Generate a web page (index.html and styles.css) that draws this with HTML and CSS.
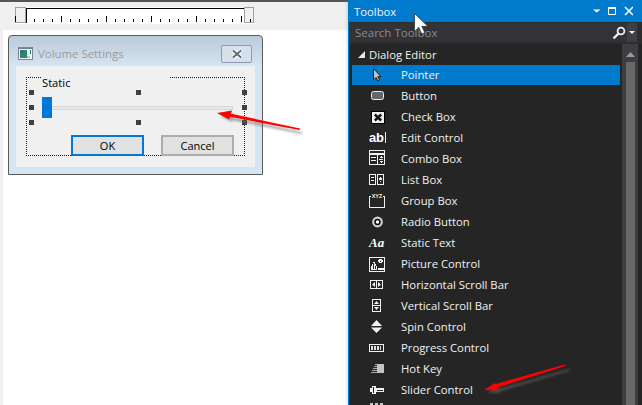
FILE: index.html
```html
<!DOCTYPE html>
<html lang="en">
<head>
<meta charset="utf-8">
<title>Toolbox</title>
<link rel="stylesheet" href="styles.css">
</head>
<body>
<div class="app">
  <main class="workspace">
    <div class="ruler-strip">
      <div class="ruler">
        <span class="ruler-thumb thumb-left"></span>
        <svg class="ruler-scale" width="218" height="16" viewBox="0 0 218 16" shape-rendering="crispEdges">
          <path d="M0.5 0V15M0 .5H218" stroke="#000" fill="none"/>
          <path d="M8.500 11v3M17.500 11v3M26.500 11v3M44.500 11v3M53.500 11v3M62.500 11v3M71.500 11v3M89.500 11v3M98.500 11v3M107.500 11v3M116.500 11v3M134.500 11v3M143.500 11v3M152.500 11v3M161.500 11v3M179.500 11v3M188.500 11v3M197.500 11v3M206.500 11v3" stroke="#000"/>
          <path d="M35.500 8v6M80.500 8v6M125.500 8v6M170.500 8v6M215.500 8v6" stroke="#000"/>
        </svg>
        <span class="ruler-thumb thumb-right"></span>
      </div>
    </div>
    <div class="surface">
      <section class="dialog">
        <header class="dialog-title">
          <svg class="dialog-icon" width="15" height="13" viewBox="0 0 15 13" shape-rendering="crispEdges">
            <rect x=".5" y=".5" width="14" height="12" fill="#f4f4f4" stroke="#7a8a8a"/>
            <rect x="1" y="1" width="13" height="1" fill="#6f8080"/>
            <rect x="2" y="3" width="7" height="8" fill="#2f8570"/>
            <rect x="2" y="3" width="4" height="3" fill="#3a6a8c"/>
            <rect x="12" y="3" width="1" height="4" fill="#1f7f6f"/>
            <rect x="9" y="9" width="3" height="2" fill="#b8c8c8"/>
          </svg>
          <span class="dialog-caption">Volume Settings</span>
          <button class="dialog-close" type="button">
            <svg width="12" height="10" viewBox="0 0 12 10"><path d="M2 1.500l8 7M10 1.500l-8 7" stroke="#fff" stroke-width="3.800"/><path d="M2 1.500l8 7M10 1.500l-8 7" stroke="#5c6670" stroke-width="1.800"/></svg>
          </button>
        </header>
        <div class="dialog-client">
          <div class="selection"></div>
          <span class="selection-gap"></span>
          <span class="static-label">Static</span>
          <span class="handle h-tl"></span><span class="handle h-tc"></span><span class="handle h-tr"></span>
          <span class="handle h-ml"></span><span class="handle h-mr"></span>
          <span class="handle h-bl"></span><span class="handle h-bc"></span><span class="handle h-br"></span>
          <div class="slider-track"></div>
          <div class="slider-thumb"></div>
          <button class="dlg-btn dlg-ok" type="button">OK</button>
          <button class="dlg-btn dlg-cancel" type="button">Cancel</button>
        </div>
      </section>
    </div>
  </main>

  <aside class="toolbox">
    <header class="tb-title">
      <span class="tb-name">Toolbox</span>
      <span class="tb-grip"></span>
      <svg class="tb-btns" width="40" height="14" viewBox="0 0 40 14">
        <path d="M0 5.500h7.500l-3.750 3z" fill="#fff"/>
        <path d="M15.500 3.500h7v7h-7z" fill="none" stroke="#fff"/>
        <path d="M15 4h8" stroke="#fff" stroke-width="2"/>
        <path d="M32 3l8 8M40 3l-8 8" stroke="#fff" stroke-width="1.500"/>
      </svg>
    </header>
    <div class="tb-search">
      <div class="tb-search-field">
        <span class="tb-search-text">Search Toolbox</span>
        <svg class="tb-search-icon" width="14" height="14" viewBox="0 0 14 14"><circle cx="9" cy="5" r="3.400" fill="none" stroke="#f1f1f1" stroke-width="1.800"/><path d="M6.500 7.500L1.500 12.500" stroke="#f1f1f1" stroke-width="2.400"/></svg>
        <span class="tb-search-drop"><svg width="6" height="3" viewBox="0 0 6 3"><path d="M0 0h6L3 3z" fill="#f1f1f1"/></svg></span>
      </div>
    </div>
    <div class="tb-body">
      <div class="tb-list">
        <div class="tb-group">
          <svg class="tb-caret" width="7" height="7" viewBox="0 0 7 7"><path d="M7 0v7H0z" fill="#e8e8e8"/></svg>
          <span>Dialog Editor</span>
        </div>
        <div class="tb-item is-active">
          <svg class="tb-icon" width="16" height="21" viewBox="0 0 16 21"><path d="M4.500 3.500v11.500l2.500-2.500 1.800 3.500 1.800-.9-1.800-3.400h3.200z" fill="#c4c4c4" stroke="#1c1c1c"/></svg>
          <span>Pointer</span>
        </div>
        <div class="tb-item">
          <svg class="tb-icon" width="16" height="21" viewBox="0 0 16 21"><rect x="2.500" y="5.500" width="12" height="8" rx="2" fill="#666" stroke="#f1f1f1"/></svg>
          <span>Button</span>
        </div>
        <div class="tb-item">
          <svg class="tb-icon" width="16" height="21" viewBox="0 0 16 21"><rect x="2" y="4" width="14" height="13" fill="#000"/><rect x="3" y="5" width="12" height="11" fill="#f1f1f1"/><path d="M5.800 7.500l6.400 6M12.200 7.500l-6.400 6" stroke="#111" stroke-width="2.400"/></svg>
          <span>Check Box</span>
        </div>
        <div class="tb-item">
          <span class="tb-icon-ab">ab<i class="tb-caret-bar"></i></span>
          <span>Edit Control</span>
        </div>
        <div class="tb-item">
          <svg class="tb-icon" width="16" height="21" viewBox="0 0 16 21" shape-rendering="crispEdges"><g fill="none" stroke="#f1f1f1"><path d="M.5 1.500h15v14H.5zM.5 5.500h15M.5 4.500h15M8.500 5.500v10M2 8.500h5M2 11.500h5M10 10.500h4"/></g><path d="M10 9h4l-2-2zM10 12h4l-2 2z" fill="#f1f1f1"/></svg>
          <span>Combo Box</span>
        </div>
        <div class="tb-item">
          <svg class="tb-icon" width="16" height="21" viewBox="0 0 16 21" shape-rendering="crispEdges"><g fill="none" stroke="#f1f1f1"><path d="M.5 4.500h6v10h-6zM8.500 4.500h6v10h-6zM2 7.500h3M2 10.500h3M10 9.500h3"/></g><path d="M10 8.500h3L11.500 6.500zM10 10.500h3L11.500 12.500z" fill="#f1f1f1"/></svg>
          <span>List Box</span>
        </div>
        <div class="tb-item">
          <svg class="tb-icon" width="16" height="21" viewBox="0 0 16 21"><path d="M2 5.500H.5v11h15v-11H14" fill="none" stroke="#f1f1f1" shape-rendering="crispEdges"/><text class="xyz" x="8" y="7" text-anchor="middle">XYZ</text></svg>
          <span>Group Box</span>
        </div>
        <div class="tb-item">
          <svg class="tb-icon" width="16" height="21" viewBox="0 0 16 21"><circle cx="8.500" cy="10" r="5.400" fill="#d0d0d0"/><circle cx="8.500" cy="10" r="3.200" fill="#0a0a0a"/><circle cx="8.500" cy="10" r="1.700" fill="#fff"/></svg>
          <span>Radio Button</span>
        </div>
        <div class="tb-item">
          <span class="tb-icon-aa">Aa</span>
          <span>Static Text</span>
        </div>
        <div class="tb-item">
          <svg class="tb-icon" width="16" height="21" viewBox="0 0 16 21" shape-rendering="crispEdges"><path d="M.5 3.500h15v14H.5z" fill="none" stroke="#f1f1f1"/><path d="M2 16v-4h1v-2h1V8h2v2h1v2h1v4zM10 5h3v1h1v2h-1v1h-3V8H9V6h1zM9 14h6v2H9z" fill="#f1f1f1"/><path d="M4 9h1v6H4zM6 12h1v3H6zM11 7h1v1h-1z" fill="#252526"/></svg>
          <span>Picture Control</span>
        </div>
        <div class="tb-item">
          <svg class="tb-icon" width="16" height="21" viewBox="0 0 16 21"><path d="M1.500 5.500h12v8h-12zM7.500 5.500v8" fill="none" stroke="#f1f1f1" shape-rendering="crispEdges"/><path d="M6 7v5L3 9.500zM9 7v5l3-2.500z" fill="#f1f1f1"/></svg>
          <span>Horizontal Scroll Bar</span>
        </div>
        <div class="tb-item">
          <svg class="tb-icon" width="16" height="21" viewBox="0 0 16 21"><path d="M3.500 3.500h8v12h-8zM3.500 9.500h8" fill="none" stroke="#f1f1f1" shape-rendering="crispEdges"/><path d="M5 8h5L7.500 5zM5 11h5l-2.500 3z" fill="#f1f1f1"/></svg>
          <span>Vertical Scroll Bar</span>
        </div>
        <div class="tb-item">
          <svg class="tb-icon" width="16" height="21" viewBox="0 0 16 21"><path d="M2 9L7.500 3 13 9zM2 10.500h11L7.500 16z" fill="#f1f1f1"/></svg>
          <span>Spin Control</span>
        </div>
        <div class="tb-item">
          <svg class="tb-icon" width="16" height="21" viewBox="0 0 16 21" shape-rendering="crispEdges"><rect x=".5" y="6.500" width="14" height="7" fill="none" stroke="#f1f1f1"/><path d="M2 8h2v4H2zM5 8h2v4H5zM8 8h2v4H8zM11 8h1v4h-1z" fill="#e0e0e0"/></svg>
          <span>Progress Control</span>
        </div>
        <div class="tb-item">
          <svg class="tb-icon" width="16" height="21" viewBox="0 0 16 21" shape-rendering="crispEdges"><path d="M8 5h7v9H8z" fill="#c4c4c4"/><path d="M6 5h2v1H6zM5 7h3v1H5zM4 9h4v1H4zM3 11h5v1H3zM2 13h6v1H2z" fill="#a8a8a8"/></svg>
          <span>Hot Key</span>
        </div>
        <div class="tb-item">
          <svg class="tb-icon" width="16" height="21" viewBox="0 0 16 21" shape-rendering="crispEdges"><path d="M1 8h2V6h4v2h8v4H7v2H3v-2H1z" fill="#f1f1f1"/><path d="M4 7h1v6H4zM8 9.500h6v1H8z" fill="#252526"/></svg>
          <span>Slider Control</span>
        </div>
        <div class="tb-item">
          <svg class="tb-icon" width="16" height="21" viewBox="0 0 16 21" shape-rendering="crispEdges"><path d="M1 2h3v2H1zM6 2h3v2H6zM11 2h3v2h-3z" fill="#c8c8c8"/></svg>
          <span></span>
        </div>
      </div>
      <div class="tb-scroll">
        <svg class="tb-scroll-up" width="9" height="5" viewBox="0 0 9 5"><path d="M0 5h9L4.500 0z" fill="#999"/></svg>
        <div class="tb-scroll-thumb"></div>
      </div>
    </div>
  </aside>
</div>

<svg class="annotations" width="642" height="405" viewBox="0 0 642 405">
  <defs>
    <filter id="blur" x="-20%" y="-50%" width="140%" height="200%"><feGaussianBlur stdDeviation="1.200"/></filter>
  </defs>
  <g fill="#666" opacity=".55" filter="url(#blur)">
    <path d="M220 116l14-2-2 8z"/>
    <path d="M232 117l70 15-.5 2-70-14z"/>
    <path d="M487 393l11-7 3 7z"/>
    <path d="M497 389l72-20 .5 2-71 21z"/>
  </g>
  <g fill="#f00">
    <path d="M217 113l15-2.500-3 9z"/>
    <path d="M230 113.500l70 15-.4 1.600-70.600-13.500z"/>
    <path d="M484 390l11-7 3 7.500z"/>
    <path d="M494 384.500l71-20 .5 1.500-69.500 22z"/>
  </g>
  <path d="M414.500 13.500v18l4.300-4 3 6.500 3-1.400-3-6.300h6z" fill="#fff" stroke="#333" stroke-width=".8"/>
</svg>
</body>
</html>
```
FILE: styles.css
```css
* { box-sizing: border-box; }
html, body { margin: 0; padding: 0; height: 100%; }
body { width: 642px; height: 405px; overflow: hidden; background: #fff; font-family: "Open Sans", "Noto Sans", sans-serif; position: relative; }
svg { display: block; }

.app { display: flex; height: 405px; }

/* left editor workspace */
.workspace { width: 348px; display: flex; flex-direction: column; background: #f0f0f0; border-top: 2px solid #555; }
.ruler-strip { height: 28px; padding: 5px 0 0 15px; flex: none; }
.ruler { width: 239px; height: 17px; display: flex; background: #fff; }
.ruler-thumb { position: relative; height: 16px; background: #f0f0f0; border: 1px solid #a0a0a0; flex: none; }
.thumb-left { width: 11px; }
.thumb-right { width: 10px; }
.thumb-left::after, .thumb-right::after { content: ""; position: absolute; top: 8px; width: 1px; height: 6px; background: #000; }
.thumb-left::after { left: -1px; }
.thumb-right::after { left: 5px; top: 11px; height: 3px; }
.ruler-scale { background: #fff; margin-top: 1px; flex: none; }
.surface { flex: 1; margin-left: 3px; background: #fff; padding: 5px 0 0 5px; }

/* dialog being designed */
.dialog { width: 255px; height: 140px; border: 1px solid #5a5a5a; border-radius: 4px 4px 0 0; background: linear-gradient(#b9cad9, #d7e4f1 30px); padding: 0 7px 7px; display: flex; flex-direction: column; }
.dialog-title { height: 30px; display: flex; align-items: center; flex: none; padding-top: 5px; }
.dialog-icon { margin: 0 5px 0 2px; flex: none; }
.dialog-caption { flex: 1; font-size: 11.400px; color: #9b9b9b; }
.dialog-close { width: 31px; height: 18px; margin: 1px 3px 0 0; padding: 0; display: flex; align-items: center; justify-content: center; border: 1px solid #8d9bb2; border-radius: 2px; background: #d5e0ec; }
.dialog-client { flex: 1; position: relative; background: #f0f0f0; }

.selection {
  position: absolute; left: 10px; top: 11px; width: 219px; height: 79px;
  background-image:
    repeating-linear-gradient(90deg, #00f 0 1px, transparent 1px 2px),
    repeating-linear-gradient(90deg, #00f 0 1px, transparent 1px 2px),
    repeating-linear-gradient(0deg, #00f 0 1px, transparent 1px 2px),
    repeating-linear-gradient(0deg, #00f 0 1px, transparent 1px 2px);
  background-size: 100% 1px, 100% 1px, 1px 100%, 1px 100%;
  background-position: left top, left bottom, left top, right top;
  background-repeat: no-repeat;
}
.selection-gap { position: absolute; left: 26px; top: 11px; width: 127px; height: 1px; background: #f0f0f0; }
.static-label { position: absolute; left: 26px; top: 9px; font-size: 11.200px; line-height: 16px; color: #000; }
.handle { position: absolute; width: 5px; height: 5px; background: #404040; }
.h-tl { left: 13px; top: 24px; }
.h-tc { left: 120px; top: 24px; }
.h-tr { left: 226px; top: 24px; }
.h-ml { left: 13px; top: 39px; }
.h-mr { left: 226px; top: 39px; }
.h-bl { left: 13px; top: 54px; }
.h-bc { left: 120px; top: 54px; }
.h-br { left: 226px; top: 54px; }
.slider-track { position: absolute; left: 26px; top: 40px; width: 191px; height: 4px; background: #e8e8e8; border: 1px solid #d6d6d6; }
.slider-thumb { position: absolute; left: 26px; top: 31px; width: 10px; height: 21px; background: #0078d7; }
.dlg-btn { position: absolute; top: 69px; width: 73px; height: 21px; padding: 0; background: #e1e1e1; font: 11px "Open Sans", sans-serif; color: #000; }
.dlg-ok { left: 55px; border: 2px solid #0078d7; }
.dlg-cancel { left: 145px; border: 2px solid #adadad; }

/* toolbox panel */
.toolbox { flex: 1; display: flex; flex-direction: column; background: #252526; border-left: 1px solid #0078c8; box-shadow: 0 0 4px rgba(0, 122, 204, .35); color: #f1f1f1; font-size: 11.300px; min-width: 0; }
.tb-title { height: 22px; background: #007acc; display: flex; align-items: center; padding: 0 9px 0 5px; flex: none; gap: 8px; }
.tb-name { font-size: 11.300px; color: #f4f4f4; }
.tb-grip { flex: 1; height: 5px; background-image: radial-gradient(#66b6e8 40%, transparent 45%); background-size: 2px 2px; }
.tb-search { height: 22px; flex: none; background: #2d2d30; padding: 1px 5px 2px 1px; }
.tb-search-field { height: 19px; background: #333337; display: flex; align-items: center; padding-left: 5px; }
.tb-search-text { flex: 1; color: #8a8a8a; font-size: 11.500px; }
.tb-search-icon { flex: none; margin-right: 1px; }
.tb-search-drop { width: 10px; height: 19px; background: #3f3f46; display: flex; align-items: center; justify-content: center; }

.tb-body { flex: 1; display: flex; min-height: 0; }
.tb-list { flex: 1; padding: 0 0 0 3px; overflow: hidden; }
.tb-group { height: 21px; display: flex; align-items: center; padding-left: 6px; gap: 4px; }
.tb-item { height: 21px; display: flex; align-items: center; padding: 0 0 2px 17px; }
.tb-item.is-active { background: #007acc; background-clip: padding-box; padding-bottom: 1px; border-bottom: 1px solid transparent; }
.tb-item > span:last-child { margin-left: 16px; white-space: nowrap; }
.tb-icon { flex: none; align-self: flex-start; }
.xyz { font: bold 5.500px "Liberation Sans", sans-serif; fill: #f1f1f1; }
.tb-icon-ab { width: 16px; flex: none; font: bold 13px "Liberation Sans", sans-serif; letter-spacing: -.3px; display: flex; align-items: center; color: #fff; }
.tb-caret-bar { display: block; width: 1px; height: 11px; background: #f1f1f1; margin-left: 1px; }
.tb-icon-aa { width: 16px; flex: none; font: italic bold 13px "Liberation Serif", serif; white-space: nowrap; color: #fff; }
.tb-scroll { width: 16px; flex: none; background: #3e3e42; margin: 0 4px 0 2px; display: flex; flex-direction: column; align-items: center; }
.tb-scroll-up { margin-top: 8px; flex: none; }
.tb-scroll-thumb { width: 9px; flex: 1; margin-top: 5px; background: #686868; }

.annotations { position: absolute; left: 0; top: 0; pointer-events: none; }
```
